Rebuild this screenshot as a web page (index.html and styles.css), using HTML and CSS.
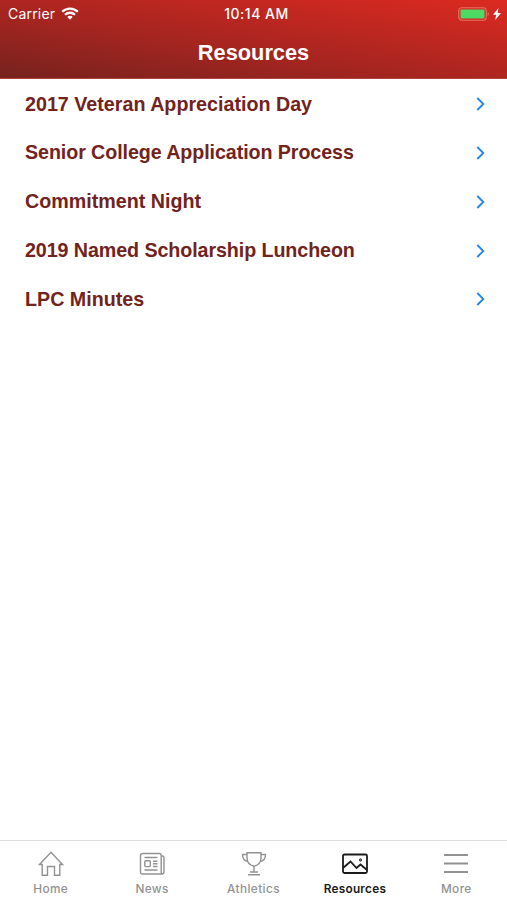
FILE: index.html
```html
<!DOCTYPE html>
<html lang="en">
<head>
  <meta charset="UTF-8">
  <meta name="viewport" content="width=device-width, initial-scale=1">
  <title>Resources</title>
  <link rel="stylesheet" href="styles.css">
</head>
<body>
  <header class="header">
    <div class="status-bar">
      <div class="carrier">
        <span>Carrier</span>
        <svg class="wifi" viewBox="0 0 18 13" fill="none" stroke="#fff" stroke-width="2.3">
          <path d="M1.2 4.8a11 11 0 0 1 15.6 0"/>
          <path d="M4 7.8a7.1 7.1 0 0 1 10 0"/>
          <path d="M9 12.7L6.3 10a3.9 3.9 0 0 1 5.4 0z" fill="#fff" stroke="none"/>
        </svg>
      </div>
      <span class="time">10:14 AM</span>
      <div class="power">
        <svg class="battery" viewBox="0 0 32 14">
          <rect x=".75" y=".75" width="27.5" height="12.5" rx="3" fill="none" stroke="#ee6c63" stroke-width="1.2"/>
          <rect x="2.5" y="2.5" width="24" height="9" rx="1" fill="#4cd964"/>
          <path d="M29.7 4.8q2.4 2.2 0 4.4z" fill="#ee6c63"/>
        </svg>
        <svg class="bolt" viewBox="0 0 8 12">
          <path d="M5.5 0L0 6.8h3.2L2.2 12 8 4.9H4.7z" fill="#fff"/>
        </svg>
      </div>
    </div>
    <h1>Resources</h1>
  </header>

  <main class="list">
    <a class="item"><span>2017 Veteran Appreciation Day</span><svg class="chevron" viewBox="0 0 9 14"><path d="M1.3 1l6 6-6 6"/></svg></a>
    <a class="item long"><span>Senior College Application Process</span><svg class="chevron" viewBox="0 0 9 14"><path d="M1.3 1l6 6-6 6"/></svg></a>
    <a class="item"><span>Commitment Night</span><svg class="chevron" viewBox="0 0 9 14"><path d="M1.3 1l6 6-6 6"/></svg></a>
    <a class="item long"><span>2019 Named Scholarship Luncheon</span><svg class="chevron" viewBox="0 0 9 14"><path d="M1.3 1l6 6-6 6"/></svg></a>
    <a class="item"><span>LPC Minutes</span><svg class="chevron" viewBox="0 0 9 14"><path d="M1.3 1l6 6-6 6"/></svg></a>
  </main>

  <nav class="tabs">
    <a class="tab">
      <svg viewBox="0 0 28 28">
        <path d="M2.5 14.5L14 2.3l11.5 12.2h-2.7v10.8h-5.3v-8.8h-7v8.8H5.2V14.5z"/>
      </svg>
      <span>Home</span>
    </a>
    <a class="tab">
      <svg viewBox="0 0 28 28">
        <path d="M23.2 6h1.3q1.5 0 1.5 1.5V22q0 2-2 2H4.5q-2 0-2-2V5.5q0-2 2-2h16.7q2 0 2 2v16.3q0 2 1.5 2"/>
        <path d="M6.5 7.5h13M6.5 20h13M15 11.3h4.5M15 13.7h4.5M15 16.5h4.5"/>
        <rect x="6.8" y="10.8" width="5.5" height="5.8" rx="1"/>
      </svg>
      <span>News</span>
    </a>
    <a class="tab">
      <svg viewBox="0 0 28 28">
        <path d="M7 2.7h14V8c0 4.5-3 7.2-7 8.2-4-1-7-3.7-7-8.2z"/>
        <path d="M7 4.5H2.5c0 4 1.7 6.3 5 6.7M21 4.5h4.5c0 4-1.7 6.3-5 6.7M14 16.2V22M10 22h8M8 24.8h12"/>
      </svg>
      <span>Athletics</span>
    </a>
    <a class="tab active">
      <svg viewBox="0 0 28 28">
        <rect x="2" y="4.5" width="24" height="18.5" rx="1.5"/>
        <path d="M2 18l7.5-6.5 6 6.5 4-3.5L26 20"/>
        <circle cx="19.5" cy="10" r="1.2" fill="#777" stroke="#444" stroke-width="1"/>
      </svg>
      <span>Resources</span>
    </a>
    <a class="tab menu">
      <svg viewBox="0 0 28 28">
        <path d="M2 5h24M2 13.5h24M2 22h24"/>
      </svg>
      <span>More</span>
    </a>
  </nav>
</body>
</html>
```
FILE: styles.css
```css
* {
  margin: 0;
  padding: 0;
  box-sizing: border-box;
}
body {
  height: 100vh;
  display: flex;
  flex-direction: column;
  background-color: #fff;
  font-family: "Liberation Sans", Arial, sans-serif;
  overflow: hidden;
}
.header {
  height: 79px;
  background: linear-gradient(to top right, #76221e 0%, #a92520 45%, #dc2a20 100%);
  border-bottom: 1px solid #b5443f;
  color: #fff;
}
.status-bar {
  height: 27px;
  display: grid;
  grid-template-columns: 1fr auto 1fr;
  align-items: center;
  padding: 0 6px 0 8px;
  font-family: Inter, sans-serif;
  font-size: 14px;
}
.carrier {
  display: flex;
  align-items: center;
  gap: 6px;
  letter-spacing: 0.2px;
}
.wifi {
  width: 18px;
  height: 13px;
}
.time {
  padding-left: 4px;
  font-weight: 500;
  letter-spacing: 0.5px;
}
.power {
  display: flex;
  align-items: center;
  justify-content: flex-end;
  gap: 3px;
}
.battery {
  width: 32px;
  height: 14px;
}
.bolt {
  width: 8px;
  height: 12px;
}
.header h1 {
  font-size: 21.8px;
  line-height: 51px;
  text-align: center;
}
.list {
  flex: 1;
  padding-top: 0.7px;
}
.item {
  height: 48.85px;
  padding: 0 22px 0 25px;
  display: flex;
  align-items: center;
  justify-content: space-between;
  color: #722320;
  font-size: 19.7px;
  font-weight: bold;
}
.item.long span {
  letter-spacing: -0.09px;
}
.chevron {
  width: 9px;
  height: 14px;
  fill: none;
  stroke: #2185e8;
  stroke-width: 1.8;
}
.tabs {
  height: 60px;
  display: flex;
  border-top: 1px solid #dedede;
}
.tab {
  flex: 1;
  display: flex;
  flex-direction: column;
  align-items: center;
  padding-top: 9px;
  color: #929292;
  font-family: Inter, sans-serif;
  font-size: 11.8px;
  font-weight: 500;
  letter-spacing: 0.4px;
}
.tab svg {
  width: 28px;
  height: 28px;
  fill: none;
  stroke: currentColor;
  stroke-width: 1.4;
}
.tab span {
  margin-top: 4px;
  line-height: 15px;
}
.tab.active {
  color: #1a1a1a;
  font-weight: 600;
  letter-spacing: 0.25px;
}
.tab.active svg {
  stroke-width: 1.8;
}
.tab.menu svg {
  stroke-width: 2;
}
```
